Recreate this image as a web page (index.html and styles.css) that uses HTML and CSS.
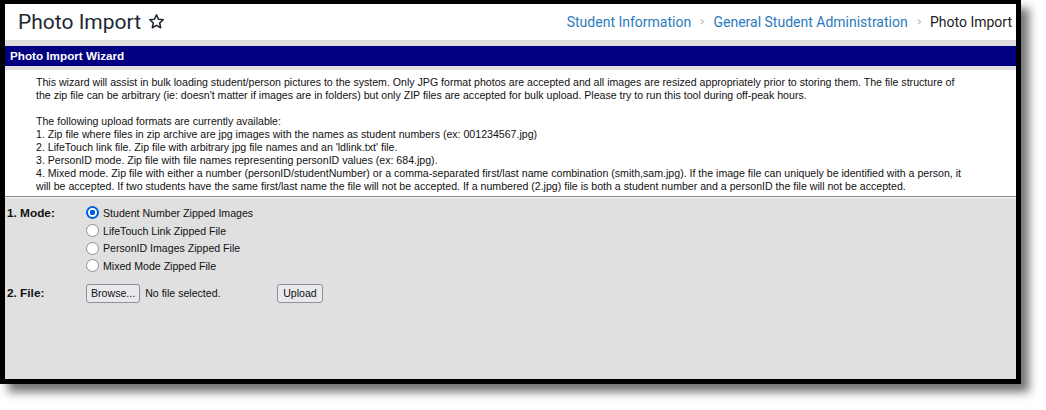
FILE: index.html
```html
<!DOCTYPE html>
<html>
<head>
<meta charset="utf-8">
<link rel="stylesheet" href="styles.css">
</head>
<body>
<div class="frame">
  <header class="page-header">
    <h1 class="title">Photo Import
      <svg class="star" width="17" height="17" viewBox="0 0 24 24"><path d="M12 2.6l2.8 6.2 6.7.7-5 4.6 1.4 6.7L12 17.4l-5.9 3.4 1.4-6.7-5-4.6 6.7-.7z" fill="none" stroke="#1d2733" stroke-width="2.2" stroke-linejoin="round"/></svg>
    </h1>
    <nav class="crumbs">
      <a class="crumb">Student Information</a>
      <span class="sep">&gt;</span>
      <a class="crumb">General Student Administration</a>
      <span class="sep">&gt;</span>
      <span class="current">Photo Import</span>
    </nav>
  </header>
  <div class="band"></div>
  <div class="wizard-title">Photo Import Wizard</div>
  <div class="band-thin"></div>
  <div class="intro">
    <p>This wizard will assist in bulk loading student/person pictures to the system. Only JPG format photos are accepted and all images are resized appropriately prior to storing them. The file structure of the zip file can be arbitrary (ie: doesn't matter if images are in folders) but only ZIP files are accepted for bulk upload. Please try to run this tool during off-peak hours.</p>
    <p>The following upload formats are currently available:<br>
    1. Zip file where files in zip archive are jpg images with the names as student numbers (ex: 001234567.jpg)<br>
    2. LifeTouch link file. Zip file with arbitrary jpg file names and an 'ldlink.txt' file.<br>
    3. PersonID mode. Zip file with file names representing personID values (ex: 684.jpg).<br>
    4. Mixed mode. Zip file with either a number (personID/studentNumber) or a comma-separated first/last name combination (smith,sam.jpg). If the image file can uniquely be identified with a person, it will be accepted. If two students have the same first/last name the file will not be accepted. If a numbered (2.jpg) file is both a student number and a personID the file will not be accepted.</p>
  </div>
  <div class="form">
    <div class="row">
      <div class="label">1. Mode:</div>
      <div class="options">
        <label class="opt"><input type="radio" name="mode" checked><span>Student Number Zipped Images</span></label>
        <label class="opt"><input type="radio" name="mode"><span>LifeTouch Link Zipped File</span></label>
        <label class="opt"><input type="radio" name="mode"><span>PersonID Images Zipped File</span></label>
        <label class="opt"><input type="radio" name="mode"><span>Mixed Mode Zipped File</span></label>
      </div>
    </div>
    <div class="row file-row">
      <div class="label">2. File:</div>
      <div class="file">
        <button class="btn">Browse...</button>
        <span class="nofile">No file selected.</span>
        <button class="btn upload">Upload</button>
      </div>
    </div>
  </div>
</div>
</body>
</html>
```
FILE: styles.css
```css
html, body {
  margin: 0;
  padding: 0;
  background: #fff;
}
body {
  width: 1046px;
  height: 410px;
  overflow: hidden;
}
.frame {
  width: 1011px;
  height: 375px;
  border: 5px solid #000;
  border-top-width: 4px;
  display: flex;
  flex-direction: column;
  background: #e0e0e0;
  box-shadow: 8px 8px 9px rgba(0,0,0,0.55);
  font-family: "Liberation Sans", Arial, sans-serif;
}
.page-header {
  height: 36px;
  background: #fff;
  display: flex;
  align-items: center;
  justify-content: space-between;
  padding: 0 4px 0 13px;
}
.title {
  margin: 0;
  font-family: Roboto, "Noto Sans", sans-serif;
  font-weight: 400;
  font-size: 21px;
  color: #1d2733;
  display: flex;
  align-items: center;
  gap: 7px;
}
.star { margin-top: -1px; }
.crumbs {
  font-family: Roboto, "Noto Sans", sans-serif;
  font-size: 14px;
  display: flex;
  align-items: center;
  gap: 8px;
  margin-top: -1px;
}
.crumb { color: #2b7bbd; }
.sep { color: #b5b5b5; font-size: 12px; transform: scaleX(0.7); }
.current { color: #222; }
.band { height: 6px; background: #dedede; }
.wizard-title {
  height: 20px;
  line-height: 20px;
  background: #000080;
  color: #fff;
  font-weight: bold;
  font-size: 11.7px;
  padding-left: 5px;
}
.band-thin { height: 4px; background: #e0e0e0; }
.intro {
  background: #fff;
  font-size: 10.6px;
  line-height: 13px;
  color: #111;
  padding: 6px 46px 3px 31px;
  border-bottom: 1px solid #8a8a8a;
}
.intro p { margin: 0 0 13px 0; }
.intro p:last-child { margin-bottom: 0; }
.form {
  flex: 1;
  border-top: 1px solid #f4f4f4;
  padding-top: 6px;
  font-size: 10.6px;
  color: #111;
}
.row { display: flex; }
.label {
  width: 79px;
  padding-left: 2px;
  font-weight: bold;
  font-size: 11.8px;
  line-height: 18px;
}
.options { display: flex; flex-direction: column; }
.opt {
  display: flex;
  align-items: center;
  height: 17.7px;
}
.opt input {
  appearance: none;
  -webkit-appearance: none;
  width: 13px;
  height: 13px;
  margin: 0 4px 0 0;
  border: 1px solid #8f8f9d;
  border-radius: 50%;
  background: #fff;
}
.opt input:checked {
  border: 2px solid #0060df;
  background: radial-gradient(circle, #0060df 0 2.6px, #fff 3px);
}
.file-row { margin-top: 9px; align-items: center; }
.file-row .label { line-height: 19px; }
.file { display: flex; align-items: center; }
.btn {
  font-family: "Liberation Sans", Arial, sans-serif;
  font-size: 10.6px;
  color: #111;
  background: #e9e9ed;
  border: 1px solid #8f8f9d;
  border-radius: 3px;
  height: 19px;
  padding: 0 4px;
}
.nofile { margin-left: 5px; width: 132px; }
.upload { padding: 0 5px; }
```
